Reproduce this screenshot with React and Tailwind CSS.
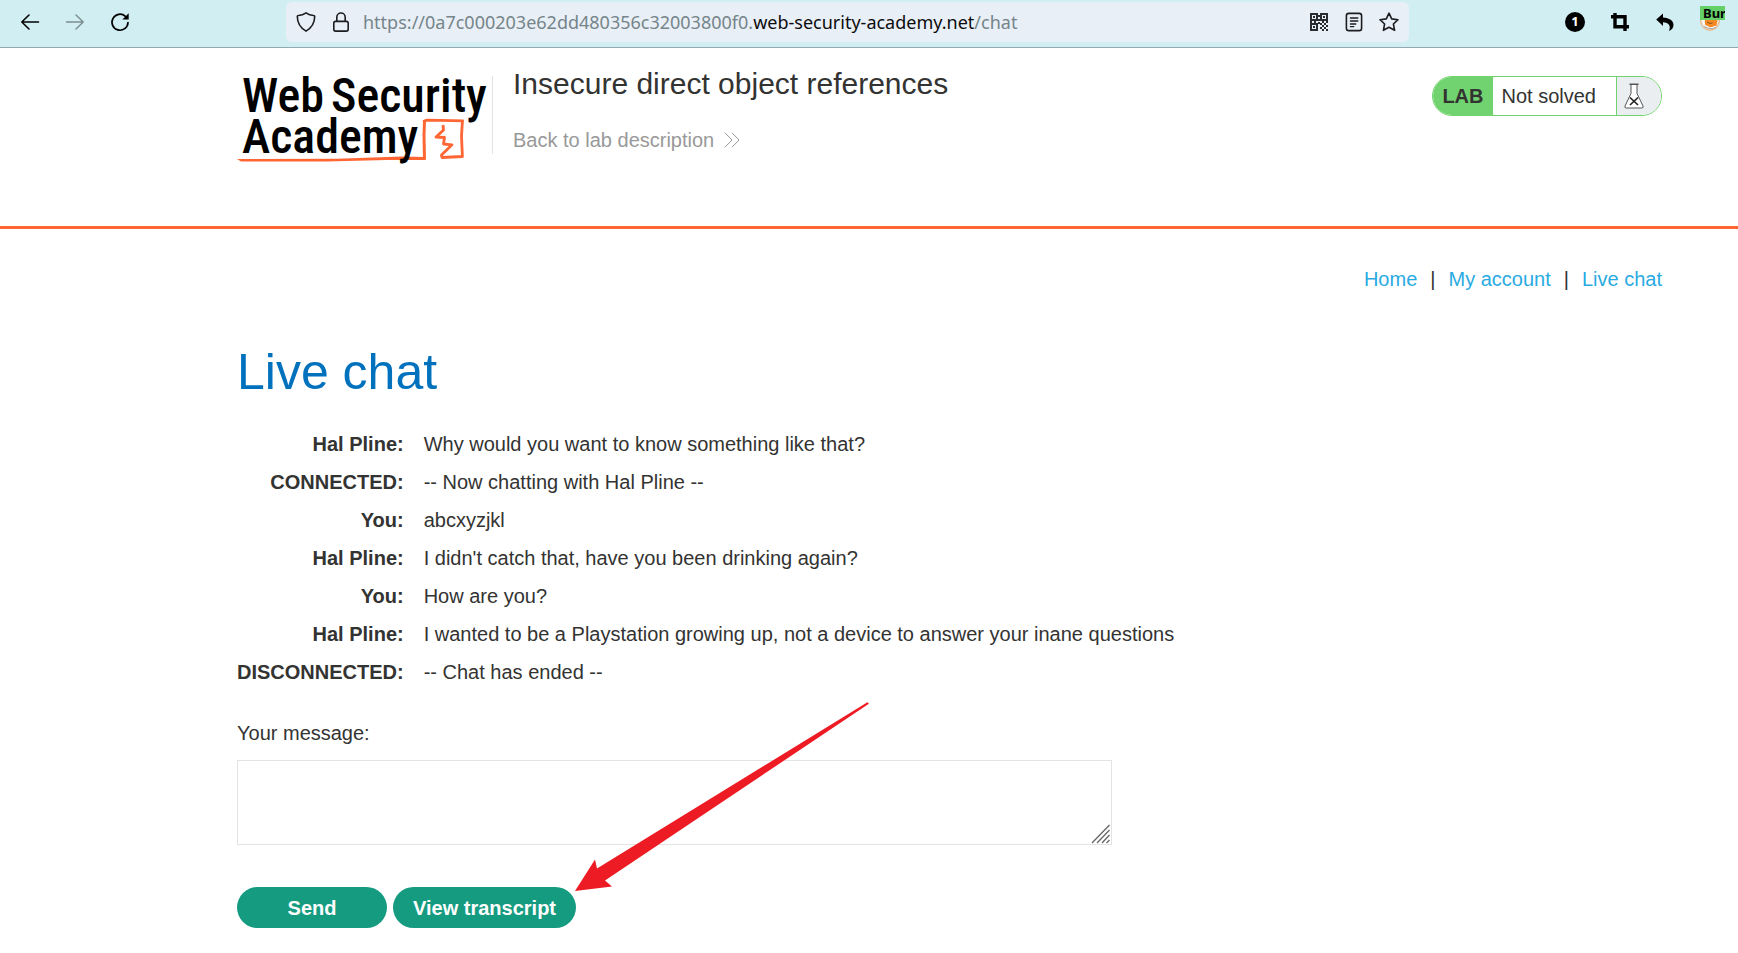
const messages = [
  ["Hal Pline:", "Why would you want to know something like that?"],
  ["CONNECTED:", "-- Now chatting with Hal Pline --"],
  ["You:", "abcxyzjkl"],
  ["Hal Pline:", "I didn't catch that, have you been drinking again?"],
  ["You:", "How are you?"],
  ["Hal Pline:", "I wanted to be a Playstation growing up, not a device to answer your inane questions"],
  ["DISCONNECTED:", "-- Chat has ended --"],
];

function ToolButton({ label, children }) {
  return (
    <button type="button" aria-label={label} className="flex size-5 shrink-0 items-center justify-center">
      {children}
    </button>
  );
}

function Stroke({ children, color = "#0c0c0d", width = 1.5 }) {
  return (
    <svg width="20" height="20" viewBox="0 0 20 20" fill="none" stroke={color} strokeWidth={width} strokeLinecap="round" strokeLinejoin="round">
      {children}
    </svg>
  );
}

function QrIcon() {
  return (
    <svg width="20" height="20" viewBox="0 0 20 20" fill="#2a2c30">
      <path fillRule="evenodd" d="M1 1h8v8H1zM3 3v4h4v-4zM11 1h8v8h-8zM13 3v4h4v-4zM1 11h8v8H1zM3 13v4h4v-4z" />
      <path d="M4 4h2v2H4zM14 4h2v2h-2zM4 14h2v2H4zM9 3h2v2H9zM9 7h2v2H9zM1 9h2v2H1zM5 9h2v2H5zM9 10h2v2H9zM13 9h2v2h-2zM17 9h2v2h-2zM11 11h2v2h-2zM15 11h2v2h-2zM13 13h2v2h-2zM17 13h2v2h-2zM11 15h2v2h-2zM15 15h2v2h-2zM13 17h2v2h-2zM17 17h2v2h-2z" />
    </svg>
  );
}

function BrowserBar() {
  return (
    <div className="flex h-12 items-center border-b border-[#93a9b1] bg-[#d1eff2] pr-3 pb-1">
      <div className="flex w-[286px] shrink-0 items-center gap-[25px] pl-5">
        <ToolButton label="Back">
          <Stroke color="#000" width={1.6}><path d="M1.800 10H18.500M9 3 1.800 10 9 17" /></Stroke>
        </ToolButton>
        <ToolButton label="Forward">
          <Stroke color="#7d8f92" width={1.5}><path d="M1.500 10H18.200M11 3 18.200 10 11 17" /></Stroke>
        </ToolButton>
        <ToolButton label="Reload">
          <svg width="20" height="20" viewBox="0 0 20 20" fill="none" stroke="#000" strokeWidth="1.700" strokeLinecap="round">
            <path d="M18 10.500A8 8 0 1 1 15.400 4.300" />
            <path d="M18.700 1.200v6.300h-6.300z" fill="#000" stroke="none" />
          </svg>
        </ToolButton>
      </div>
      <div className="flex h-10 min-w-0 grow items-center rounded-md bg-[#e9eff6] px-2.5">
        <ToolButton label="Tracking protection">
          <Stroke color="#1c1d20" width={1.6}><path d="M10 .9c2.200 1.600 5 2.500 7.600 2.600.7 0 1.100.5 1.100 1.100-.1 6-2.600 11.200-8.700 14.500C3.900 15.800 1.400 10.600 1.300 4.600c0-.6.4-1.100 1.100-1.100C5 3.400 7.800 2.500 10 .9Z" /></Stroke>
        </ToolButton>
        <span className="w-[15px] shrink-0" />
        <ToolButton label="Site information">
          <Stroke color="#1c1d20" width={1.6}>
            <rect x="2.800" y="9.400" width="14.400" height="9.700" rx="1.800" />
            <path d="M5.800 9.200V5.200a4.200 4.200 0 0 1 8.400 0v4" />
          </Stroke>
        </ToolButton>
        <div className="min-w-0 grow truncate pl-3 font-['Noto_Sans','Open_Sans',sans-serif] text-[18px] leading-6 text-[#75858a]">
          https://0a7c000203e62dd480356c32003800f0.<span className="text-[#0c0c0d]">web-security-academy.net</span>/chat
        </div>
        <div className="flex items-center gap-[15px]">
          <ToolButton label="QR code"><QrIcon /></ToolButton>
          <ToolButton label="Reader view">
            <Stroke color="#1c1d20" width={1.6}>
              <rect x="2.400" y="1.400" width="15.200" height="17.200" rx="2.400" />
              <path d="M6.400 6h7.400M6.400 9h7.400M6.400 12h5.400M6.400 14.600h3.400" strokeWidth="1.300" />
            </Stroke>
          </ToolButton>
          <ToolButton label="Bookmark">
            <Stroke color="#1c1d20" width={1.6}><path d="m10 1.200 2.700 5.700 6.300.8-4.600 4.300 1.200 6.300L10 15.200l-5.600 3.100L5.600 12 1 7.700l6.300-.8Z" /></Stroke>
          </ToolButton>
        </div>
      </div>
      <div className="flex shrink-0 items-center gap-[25px] pl-[156px]">
        <ToolButton label="One notification">
          <span className="flex size-5 items-center justify-center rounded-full bg-black font-['Noto_Sans',sans-serif] text-[13px] leading-none font-bold text-white">1</span>
        </ToolButton>
        <ToolButton label="Capture">
          <svg width="20" height="20" viewBox="0 0 20 20" fill="none" stroke="#000" strokeWidth="3.400">
            <path d="M1 4.800h14V19M5 1v13.800H19" />
          </svg>
        </ToolButton>
        <ToolButton label="Undo">
          <svg width="20" height="20" viewBox="0 0 20 20">
            <path d="M1.200 7.600 8 1.600v3.800c6.500.3 10.500 3.200 10.500 7.600 0 2.800-1.800 5-4.600 6.100 2.500-5.400-.3-8.700-5.900-8.800v3.600Z" />
          </svg>
        </ToolButton>
        <button type="button" className="relative flex h-8 w-[26px] shrink-0 items-end justify-start">
          <svg width="20" height="20" viewBox="0 0 20 20" className="mb-[7px]">
            <circle cx="10" cy="10" r="9.300" fill="#e8e4e0" stroke="#f0a968" />
            <path d="M5 8h12.500l-1 7-6 1.500L5 14Z" fill="#f68b26" />
            <path d="m2.500 9 2 5.500 5.500 2.500 6-1.500" fill="none" stroke="#fff" strokeWidth="1.200" />
            <path d="m7 11 3 1.500 2.500-.8" fill="none" stroke="#8a4a1c" />
            <path d="M4 15.500q5.500 3.500 12 1" fill="none" stroke="#a9a9a9" strokeWidth="1.200" />
          </svg>
          <span className="absolute top-0 left-0 h-3.5 w-[25px] overflow-hidden bg-[#65cf68] pl-[3px] text-left font-['Noto_Sans',sans-serif] text-[13px] leading-3.5 font-bold text-black">Bur</span>
        </button>
      </div>
    </div>
  );
}

function Logo() {
  return (
    <svg width="250" height="90" viewBox="0 0 250 90" role="img" aria-label="Web Security Academy" className="shrink-0 overflow-visible">
      <g fill="none" stroke="#ff6633" strokeLinejoin="round">
        <path d="M187.500 83.500 187 59 187.500 44.500" strokeWidth="3" />
        <path d="M186 45.500 190 44.200 226.500 44.800" strokeWidth="2.800" />
        <path d="M225.500 44 224.500 60 225.400 80.500 205 81.500 204.500 79 215 68.800 206.500 68 207.500 61.500 199 61 206.500 54 206 49" strokeWidth="2.800" />
      </g>
      <path d="M0 83 6 83 100 82.800 165 80.500 188.500 81 188.500 84 150 84 90 85.600 4 85.400Z" fill="#ff6633" />
      <g fontFamily="'Roboto Condensed','Liberation Sans Narrow',Roboto,sans-serif" fontSize="48" fontWeight="500" fill="#000">
        <text x="5" y="36">Web</text>
        <text x="94" y="36">Security</text>
        <text x="5" y="77">Academy</text>
      </g>
    </svg>
  );
}

function LabStatus() {
  return (
    <div className="flex h-10 shrink-0 overflow-hidden rounded-full border border-[#71d36f] bg-white">
      <p className="flex items-center bg-[#71d36f] pr-[9px] pl-[9px] font-bold">LAB</p>
      <p className="flex items-center pr-5 pl-[9px]">Not solved</p>
      <span className="flex w-[45px] items-center border-l border-[#71d36f] bg-[#eaeef1] pl-[7px]">
        <svg width="20" height="26" viewBox="0 0 20 26" fill="#fff" stroke="#555" strokeWidth="1">
          <path d="M7 1.500v9L1 23q-.8 2 1.500 2h15q2.300 0 1.500-2l-6-12.500v-9" />
          <path d="M5.500 1.200h9" strokeWidth="1.500" />
          <path d="m6 14.500 8 7.500m0-7.500L6 22" stroke="#222" strokeWidth="1.700" />
        </svg>
      </span>
    </div>
  );
}

export default function App() {
  return (
    <div className="min-h-screen bg-white font-['Liberation_Sans',Arial,sans-serif] text-xl leading-6 text-[#333332]">
      <BrowserBar />
      <header className="flex items-start border-b-3 border-[#ff6633] pt-7 pr-[76px] pb-[60px] pl-[237px]">
        <Logo />
        <div className="ml-[5px] flex h-[78px] grow items-start border-l border-[#e3e3e3] pl-5">
          <div>
            <h2 className="-mt-2 text-3xl leading-8">Insecure direct object references</h2>
            <a href="#lab" className="mt-7 flex items-center gap-2.5 text-[#999]">
              Back to lab description
              <svg width="16" height="16" viewBox="0 0 16 16" fill="none" stroke="#999">
                <path d="m1 .8 7 7.200-7 7.200M8 .8 15 8l-7 7.200" />
              </svg>
            </a>
          </div>
        </div>
        <LabStatus />
      </header>
      <main className="pt-[38px] pr-[76px] pb-6 pl-[237px]">
        <nav className="flex justify-end gap-[13px]">
          <a href="#home" className="text-[#29abe2]">Home</a>
          <span>|</span>
          <a href="#account" className="text-[#29abe2]">My account</a>
          <span>|</span>
          <a href="#chat" className="text-[#29abe2]">Live chat</a>
        </nav>
        <h1 className="mt-[51px] text-[50px] leading-[60px] text-[#0071bc]">Live chat</h1>
        <table className="mt-[23px] border-collapse">
          <tbody>
            {messages.map(([who, text], i) => (
              <tr key={i} className="h-[38px]">
                <th scope="row" className="pr-5 text-right font-bold">{who}</th>
                <td>{text}</td>
              </tr>
            ))}
          </tbody>
        </table>
        <form className="relative mt-[30px]" onSubmit={(e) => e.preventDefault()}>
          <label htmlFor="message" className="block">Your message:</label>
          <div className="relative mt-[15px] w-[875px] max-w-full">
            <textarea id="message" className="block h-[85px] w-full resize-none border border-[#e3e3e3] p-2 outline-none" />
            <svg width="20" height="20" viewBox="0 0 20 20" fill="none" stroke="#666" strokeWidth="1.300" className="pointer-events-none absolute right-px bottom-px">
              <path d="M1 19 18.500 1M6 19 18.500 6M11 19l7.500-8M15.500 19l3-3" />
            </svg>
          </div>
          <div className="mt-[42px] flex gap-1.5">
            <button type="submit" className="h-[41px] w-[150px] rounded-full bg-[#159b7f] font-bold text-white">Send</button>
            <button type="button" className="h-[41px] rounded-full bg-[#159b7f] px-5 font-bold text-white">View transcript</button>
          </div>
          <svg width="296" height="190" viewBox="0 0 296 190" className="pointer-events-none absolute bottom-9 left-[337px]" aria-hidden="true">
            <path d="M1 189 21 157.500 23 166.500 293 .5Q295 0 294.500 2L31 178.500 38 184.500Z" fill="#ed1c24" />
          </svg>
        </form>
      </main>
    </div>
  );
}
